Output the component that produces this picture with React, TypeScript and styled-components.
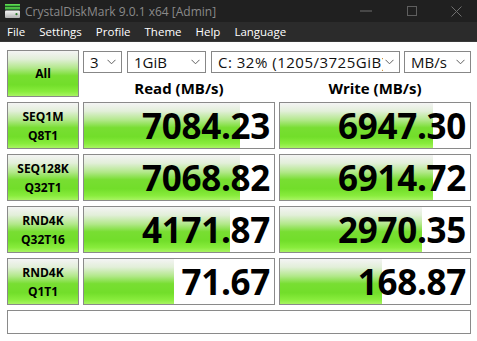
import React from "react";
import styled, { createGlobalStyle } from "styled-components";

const GlobalStyle = createGlobalStyle`
  html, body { margin: 0; padding: 0; background: #ffffff; }
  body { font-family: "Open Sans", "Noto Sans", sans-serif; }
  * { box-sizing: border-box; }
`;

const Window = styled.div`
  width: 477px;
  height: 341px;
  overflow: hidden;
  background: #ffffff;
  display: flex;
  flex-direction: column;
`;

const TitleBar = styled.div`
  height: 22px;
  background: #202020;
  display: flex;
  align-items: center;
`;

const AppIcon = styled.svg`
  margin-left: 4px;
  width: 17px;
  height: 16px;
  flex: none;
`;

const TitleText = styled.div`
  margin-left: 4px;
  color: #8a8a8a;
  font-size: 12px;
  flex: 1;
  white-space: nowrap;
`;

const WinButton = styled.div<{ $w: number }>`
  width: ${(p) => p.$w}px;
  height: 22px;
  display: flex;
  align-items: center;
  justify-content: center;
`;

const MenuBar = styled.div`
  height: 20px;
  background: #2b2b2b;
  display: flex;
  align-items: center;
  border-bottom: 1px solid #3a3a3a;
`;

const MenuItem = styled.div`
  color: #ffffff;
  font-size: 11.5px;
  padding: 0 7px;
  line-height: 19px;
`;

const Main = styled.div`
  padding: 8px 6px 0 7px;
  display: grid;
  grid-template-columns: 72px 192px 192px;
  grid-template-rows: 47px 47px 47px 47px 47px 24px;
  column-gap: 4px;
  row-gap: 5px;
`;

const greenGradient = `linear-gradient(to bottom,
  #f4f4f4 0%,
  #e2efd9 18%,
  #b2e88a 38%,
  #78de32 55%,
  #72de2a 75%,
  #88ec3c 90%,
  #a8f462 100%)`;

const TestButton = styled.div`
  border: 1px solid #8a8a8a;
  background: ${greenGradient};
  display: flex;
  flex-direction: column;
  align-items: center;
  justify-content: center;
  font-weight: 700;
  font-size: 12px;
  line-height: 19px;
  color: #000;
`;

const HeaderCell = styled.div`
  grid-column: 2 / 4;
  display: flex;
  flex-direction: column;
`;

const ComboRow = styled.div`
  margin-top: 1px;
  height: 22px;
  display: flex;
`;

const Combo = styled.div<{ $w: number; $gap: number }>`
  width: ${(p) => p.$w}px;
  margin-right: ${(p) => p.$gap}px;
  height: 22px;
  border: 1px solid #878787;
  background: #fff;
  display: flex;
  align-items: center;
  padding-left: 6px;
  padding-right: 5px;
  font-size: 15px;
  color: #111;
`;

const ComboText = styled.span<{ $spacing?: number }>`
  flex: 1;
  overflow: hidden;
  white-space: nowrap;
  line-height: 20px;
  letter-spacing: ${(p) => p.$spacing ?? 0}px;
`;

const Chevron = styled.svg`
  flex: none;
  width: 9px;
  height: 6px;
  margin-left: 2px;
`;

const HeadLabels = styled.div`
  display: grid;
  grid-template-columns: 192px 192px;
  column-gap: 4px;
  margin-top: 7px;
`;

const HeadLabel = styled.div`
  text-align: center;
  font-weight: 700;
  font-size: 15px;
  line-height: 16px;
  color: #000;
`;

const ResultBox = styled.div`
  position: relative;
  border: 1px solid #8a8a8a;
  background: #fff;
  overflow: hidden;
`;

const Bar = styled.div`
  position: absolute;
  left: 0;
  top: 0;
  bottom: 0;
  background: ${greenGradient};
`;

const Value = styled.div`
  position: relative;
  text-align: right;
  padding-right: 4px;
  font-weight: 700;
  font-size: 35px;
  line-height: 45px;
  color: #000;
  letter-spacing: -0.3px;
`;

const CommentBox = styled.div`
  grid-column: 1 / 4;
  border: 1px solid #8a8a8a;
  background: #fff;
`;

const rows = [
  { l1: "SEQ1M", l2: "Q8T1", read: "7084.23", rp: 82.1, write: "6947.30", wp: 80.5 },
  { l1: "SEQ128K", l2: "Q32T1", read: "7068.82", rp: 82.1, write: "6914.72", wp: 80.5 },
  { l1: "RND4K", l2: "Q32T16", read: "4171.87", rp: 76.8, write: "2970.35", wp: 74.7 },
  { l1: "RND4K", l2: "Q1T1", read: "71.67", rp: 47.4, write: "168.87", wp: 53.7 },
];

const ChevronIcon = () => (
  <Chevron viewBox="0 0 9 6">
    <polyline points="0.5,0.8 4.5,4.8 8.5,0.8" fill="none" stroke="#606060" strokeWidth="1" />
  </Chevron>
);

export default function App() {
  return (
    <Window>
      <GlobalStyle />
      <TitleBar>
        <AppIcon viewBox="0 0 17 16">
          <defs>
            <linearGradient id="ig" x1="0" y1="0" x2="0" y2="1">
              <stop offset="0" stopColor="#6fe85a" />
              <stop offset="1" stopColor="#1f9a2a" />
            </linearGradient>
            <linearGradient id="ib" x1="0" y1="0" x2="0" y2="1">
              <stop offset="0" stopColor="#f4f4f4" />
              <stop offset="1" stopColor="#b0b0b0" />
            </linearGradient>
          </defs>
          <rect x="1" y="1" width="15" height="2.5" fill="url(#ig)" />
          <rect x="1" y="4.2" width="15" height="2.5" fill="url(#ig)" />
          <rect x="1" y="7.5" width="15" height="7.5" rx="1" fill="url(#ib)" />
          <circle cx="12.5" cy="11.2" r="1.1" fill="#2a7a2a" />
        </AppIcon>
        <TitleText>CrystalDiskMark 9.0.1 x64 [Admin]</TitleText>
        <WinButton $w={46}>
          <svg width="12" height="2" viewBox="0 0 12 2">
            <line x1="0" y1="1" x2="12" y2="1" stroke="#6f6f6f" strokeWidth="1" />
          </svg>
        </WinButton>
        <WinButton $w={46}>
          <svg width="10" height="10" viewBox="0 0 10 10">
            <rect x="0.5" y="0.5" width="9" height="9" fill="none" stroke="#5f5f5f" strokeWidth="1" />
          </svg>
        </WinButton>
        <WinButton $w={42}>
          <svg width="11" height="11" viewBox="0 0 11 11">
            <path d="M0.5 0.5 L10.5 10.5 M10.5 0.5 L0.5 10.5" stroke="#6f6f6f" strokeWidth="1" />
          </svg>
        </WinButton>
      </TitleBar>
      <MenuBar>
        <MenuItem>File</MenuItem>
        <MenuItem>Settings</MenuItem>
        <MenuItem>Profile</MenuItem>
        <MenuItem>Theme</MenuItem>
        <MenuItem>Help</MenuItem>
        <MenuItem>Language</MenuItem>
      </MenuBar>
      <Main>
        <TestButton>All</TestButton>
        <HeaderCell>
          <ComboRow>
            <Combo $w={39} $gap={5}>
              <ComboText>3</ComboText>
              <ChevronIcon />
            </Combo>
            <Combo $w={79} $gap={5}>
              <ComboText>1GiB</ComboText>
              <ChevronIcon />
            </Combo>
            <Combo $w={189} $gap={4}>
              <ComboText $spacing={0.5}>C: 32% (1205/3725GiB)</ComboText>
              <ChevronIcon />
            </Combo>
            <Combo $w={67} $gap={0}>
              <ComboText>MB/s</ComboText>
              <ChevronIcon />
            </Combo>
          </ComboRow>
          <HeadLabels>
            <HeadLabel>Read (MB/s)</HeadLabel>
            <HeadLabel>Write (MB/s)</HeadLabel>
          </HeadLabels>
        </HeaderCell>
        {rows.map((r, i) => (
          <React.Fragment key={i}>
            <TestButton>
              <div>{r.l1}</div>
              <div>{r.l2}</div>
            </TestButton>
            <ResultBox>
              <Bar style={{ width: `${r.rp}%` }} />
              <Value>{r.read}</Value>
            </ResultBox>
            <ResultBox>
              <Bar style={{ width: `${r.wp}%` }} />
              <Value>{r.write}</Value>
            </ResultBox>
          </React.Fragment>
        ))}
        <CommentBox />
      </Main>
    </Window>
  );
}
